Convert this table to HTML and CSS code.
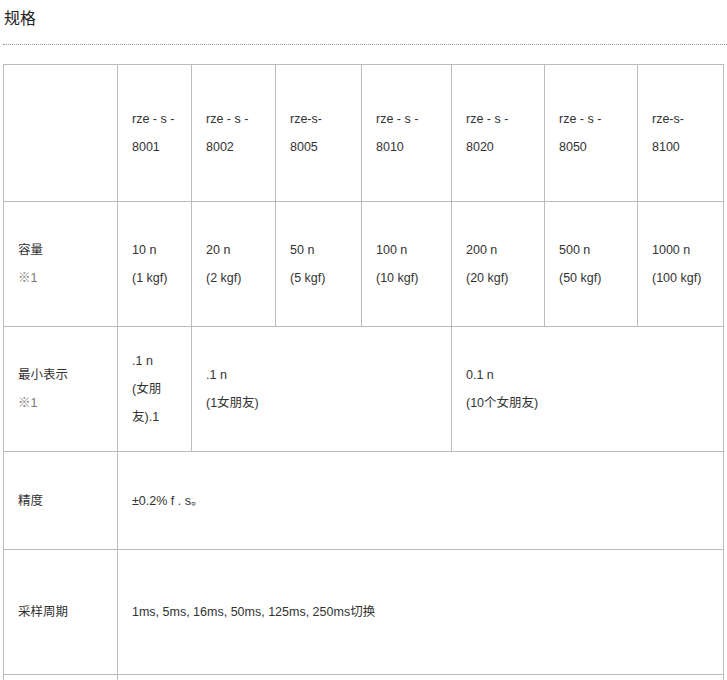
FILE: index.html
```html
<!DOCTYPE html>
<html lang="zh-CN">
<head>
<meta charset="utf-8">
<title>规格</title>
<link rel="stylesheet" href="styles.css">
</head>
<body>
<div class="page">
  <h2 class="title">规格</h2>
  <table class="spec">
    <colgroup>
      <col class="c1"><col class="c2"><col class="c3"><col class="c4"><col class="c5"><col class="c6"><col class="c7"><col class="c8">
    </colgroup>
    <tr class="r1">
      <td></td>
      <td>rze - s -<br>8001</td>
      <td>rze - s -<br>8002</td>
      <td>rze-s-<br>8005</td>
      <td>rze - s -<br>8010</td>
      <td>rze - s -<br>8020</td>
      <td>rze - s -<br>8050</td>
      <td>rze-s-<br>8100</td>
    </tr>
    <tr class="r2">
      <td>容量<br><span class="note">※1</span></td>
      <td>10 n<br>(1 kgf)</td>
      <td>20 n<br>(2 kgf)</td>
      <td>50 n<br>(5 kgf)</td>
      <td>100 n<br>(10 kgf)</td>
      <td>200 n<br>(20 kgf)</td>
      <td>500 n<br>(50 kgf)</td>
      <td>1000 n<br>(100 kgf)</td>
    </tr>
    <tr class="r3">
      <td>最小表示<br><span class="note">※1</span></td>
      <td>.1 n<br>(女朋<br>友).1</td>
      <td colspan="3">.1 n<br>(1女朋友)</td>
      <td colspan="3">0.1 n<br>(10个女朋友)</td>
    </tr>
    <tr class="r4">
      <td>精度</td>
      <td colspan="7">±0.2% f . s。</td>
    </tr>
    <tr class="r5">
      <td>采样周期</td>
      <td colspan="7">1ms, 5ms, 16ms, 50ms, 125ms, 250ms切换</td>
    </tr>
    <tr class="r6">
      <td>&nbsp;</td>
      <td colspan="7">&nbsp;</td>
    </tr>
  </table>
</div>
</body>
</html>
```
FILE: styles.css
```css
html, body {
  margin: 0;
  padding: 0;
  background: #fff;
}
.page {
  padding-left: 3px;
  font-family: "Liberation Sans", Arial, "Noto Sans CJK SC", sans-serif;
  color: #333;
}
.title {
  margin: 0 0 19px 0;
  padding: 5px 0 15px 1px;
  font-size: 16px;
  line-height: 24px;
  font-weight: normal;
  color: #222;
  font-family: "Noto Sans CJK SC", sans-serif;
  border-bottom: 1px dotted #999;
}
.spec {
  border-collapse: collapse;
  table-layout: fixed;
  width: 720px;
  font-size: 12.5px;
  line-height: 28px;
}
.spec td {
  border: 1px solid #bbb;
  padding: 0 14px;
  vertical-align: middle;
  text-align: left;
}
.c1 { width: 114px; }
.c2 { width: 74px; }
.c3 { width: 84px; }
.c4 { width: 86px; }
.c5 { width: 90px; }
.c6 { width: 93px; }
.c7 { width: 93px; }
.c8 { width: 86px; }
.r1 { height: 137px; }
.r2 { height: 125px; }
.r3 { height: 125px; }
.r4 { height: 98px; }
.r5 { height: 125px; }
.r6 { height: 125px; }
.note {
  color: #777;
}
```
